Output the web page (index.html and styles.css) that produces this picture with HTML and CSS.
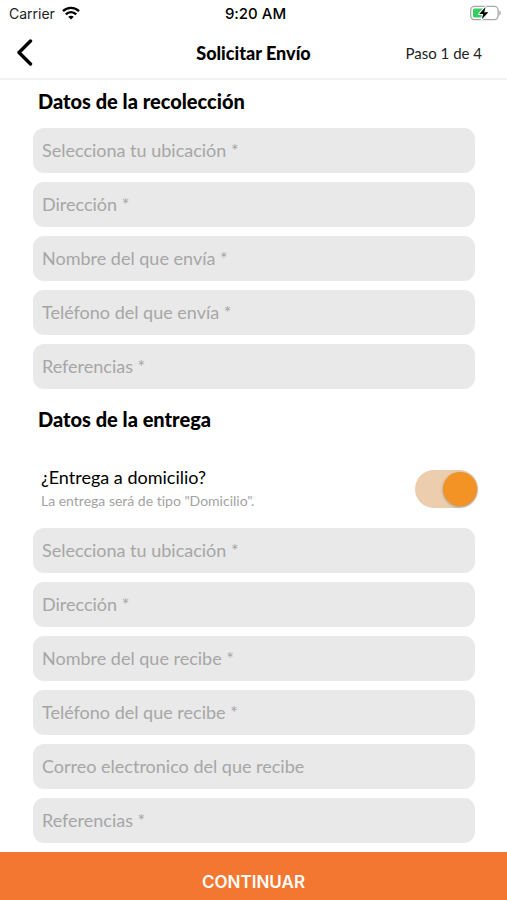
FILE: index.html
```html
<!DOCTYPE html>
<html lang="es">
<head>
    <meta charset="utf-8">
    <meta name="viewport" content="width=device-width, initial-scale=1">
    <title>Solicitar Envío</title>
    <link rel="stylesheet" href="styles.css">
</head>
<body>

<div class="status-bar">
    <div class="carrier">
        <span>Carrier</span>
        <svg width="18" height="14" viewBox="0 0 18 14" fill="none" stroke="#000" stroke-width="2.4">
            <path d="M1 5.2C5.4 .7 12.6 .7 17 5.2"/>
            <path d="M3.8 8.4c2.9-3 7.5-3 10.4 0"/>
            <path d="M9 13.6L6.200 10.8c1.600-1.500 4-1.500 5.600 0z" fill="#000" stroke="none"/>
        </svg>
    </div>
    <div class="clock">9:20 AM</div>
    <div class="battery">
        <svg width="32" height="16" viewBox="0 0 32 16">
            <rect x=".7" y="1.4" width="27.4" height="13.2" rx="3.8" fill="#fff" stroke="#a8a8a8" stroke-width="1.3"/>
            <path d="M29.300 5.500c2 .6 2 4.400 0 5z" fill="#a8a8a8"/>
            <path d="M4.700 3.400h10.800v9.200H4.700a1.700 1.700 0 0 1-1.700-1.700V5.100a1.700 1.700 0 0 1 1.700-1.700z" fill="#35cf62"/>
            <path d="M15.600 2L9.200 8.900h4L11.800 14.300 18.400 7.200h-4.200z" fill="#000" stroke="#fff" stroke-width="2" stroke-linejoin="round" paint-order="stroke"/>
        </svg>
    </div>
</div>

<header class="nav-bar">
    <button type="button" class="back" aria-label="Volver">
        <svg width="18" height="28" viewBox="0 0 18 28" fill="none" stroke="#000" stroke-width="3.4" stroke-linecap="round" stroke-linejoin="round">
            <path d="M14.500 2L3 13.500 14.500 25"/>
        </svg>
    </button>
    <h1>Solicitar Envío</h1>
    <span class="step">Paso 1 de 4</span>
</header>

<form class="shipping">
    <section>
        <h2>Datos de la recolección</h2>
        <div class="fields">
            <input type="text" aria-label="Selecciona tu ubicación" placeholder="Selecciona tu ubicación *">
            <input type="text" aria-label="Dirección" placeholder="Dirección *">
            <input type="text" aria-label="Nombre del que envía" placeholder="Nombre del que envía *">
            <input type="tel" aria-label="Teléfono del que envía" placeholder="Teléfono del que envía *">
            <input type="text" aria-label="Referencias" placeholder="Referencias *">
        </div>
    </section>

    <section>
        <h2>Datos de la entrega</h2>
        <div class="delivery">
            <div class="delivery-text">
                <label for="domicilio">¿Entrega a domicilio?</label>
                <small id="domicilio-help">La entrega será de tipo "Domicilio".</small>
            </div>
            <input type="checkbox" class="switch" id="domicilio" aria-describedby="domicilio-help" checked>
        </div>
        <div class="fields">
            <input type="text" aria-label="Selecciona tu ubicación" placeholder="Selecciona tu ubicación *">
            <input type="text" aria-label="Dirección" placeholder="Dirección *">
            <input type="text" aria-label="Nombre del que recibe" placeholder="Nombre del que recibe *">
            <input type="tel" aria-label="Teléfono del que recibe" placeholder="Teléfono del que recibe *">
            <input type="email" aria-label="Correo electronico del que recibe" placeholder="Correo electronico del que recibe">
            <input type="text" aria-label="Referencias" placeholder="Referencias *">
        </div>
    </section>

    <button type="submit" class="continue">CONTINUAR</button>
</form>

</body>
</html>
```

FILE: styles.css
```css
* {
    box-sizing: border-box;
}
body {
    margin: 0;
    background: #fff;
    color: #000;
    font-family: Lato, sans-serif;
    font-variant-ligatures: none;
}
h1, h2 {
    margin: 0;
    font-weight: 900;
}
button {
    border: none;
    padding: 0;
    cursor: pointer;
}
svg {
    display: block;
}

/* status bar */
.status-bar {
    display: grid;
    grid-template-columns: 1fr auto 1fr;
    align-items: center;
    height: 28px;
    padding: 0 5px 2px 9px;
    font-family: Inter, sans-serif;
    font-size: 14px;
}
.carrier {
    display: flex;
    align-items: center;
    gap: 7px;
    color: #222;
}
.clock {
    font-size: 15px;
    font-weight: 500;
}
.battery {
    justify-self: end;
}

/* title bar */
.nav-bar {
    display: grid;
    grid-template-columns: 1fr auto 1fr;
    align-items: center;
    height: 52px;
    padding: 0 16px;
    border-bottom: 2px solid #f1f1f1;
}
.back {
    justify-self: start;
    background: none;
}
.nav-bar h1 {
    font-size: 18px;
}
.step {
    justify-self: end;
    padding-right: 9px;
    font-size: 15px;
    color: #222;
}

/* form */
.shipping h2 {
    padding: 8px 38px 0;
    font-size: 20px;
    line-height: 26px;
}
.fields {
    display: flex;
    flex-direction: column;
    gap: 9px;
    padding: 14px 32px 9px 33px;
}
.fields input {
    width: 100%;
    height: 45px;
    padding: 0 9px 2px;
    border: none;
    border-radius: 11px;
    background: #e9e9e9;
    font-family: inherit;
    font-size: 18px;
}
.fields input::placeholder {
    color: #a6a6a6;
    opacity: 1;
}
.delivery {
    display: flex;
    align-items: center;
    justify-content: space-between;
    padding: 33px 29px 2px 41px;
}
.delivery-text {
    display: flex;
    flex-direction: column;
}
.delivery-text label {
    font-size: 18px;
    line-height: 24px;
}
.delivery-text small {
    font-size: 14px;
    line-height: 23px;
    color: #a3a3a3;
}
.switch {
    appearance: none;
    display: flex;
    align-items: center;
    width: 63px;
    height: 38px;
    margin: 0;
    padding: 0 1px;
    border-radius: 19px;
    background: #ddd;
    cursor: pointer;
}
.switch::before {
    content: "";
    width: 34px;
    height: 34px;
    border-radius: 50%;
    background: #fff;
    box-shadow: 0 1px 3px rgba(0, 0, 0, 0.3);
}
.switch:checked {
    justify-content: flex-end;
    background: #ecceae;
}
.switch:checked::before {
    background: #f39325;
}
.continue {
    display: block;
    width: 100%;
    height: 48px;
    padding-top: 12px;
    background: #f37731;
    color: #fff;
    font-family: Inter, sans-serif;
    font-size: 17px;
    font-weight: 600;
}
```
